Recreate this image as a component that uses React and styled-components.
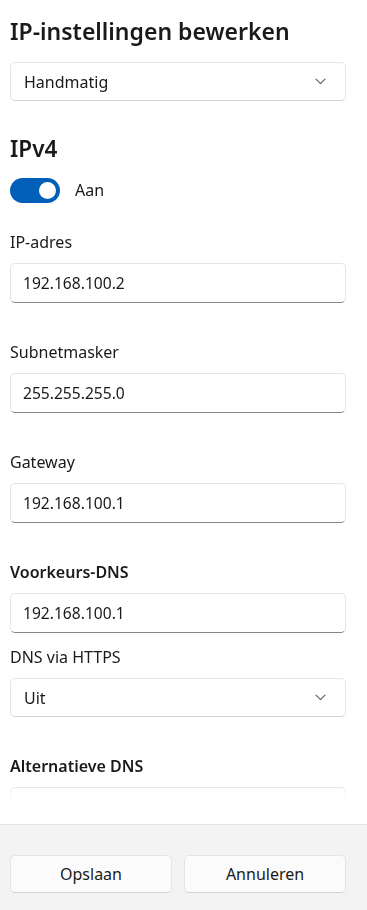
import React from 'react';
import styled, { createGlobalStyle } from 'styled-components';

const GlobalStyle = createGlobalStyle`
    html, body {
        margin: 0;
        padding: 0;
        background: #ffffff;
    }
    body {
        font-family: 'Noto Sans', 'Open Sans', sans-serif;
        color: #1a1a1a;
    }
`;

const Page = styled.div`
    width: 367px;
    height: 910px;
    display: flex;
    flex-direction: column;
    overflow: hidden;
`;

const Content = styled.div`
    flex: 1;
    min-height: 0;
    overflow: hidden;
    padding: 0 21px 0 10px;
    -webkit-mask-image: linear-gradient(to bottom, #000 calc(100% - 38px), transparent calc(100% - 24px));
    mask-image: linear-gradient(to bottom, #000 calc(100% - 38px), transparent calc(100% - 24px));
`;

const Title = styled.h1`
    margin: 14px 0 0;
    font-size: 23px;
    line-height: 34px;
    font-weight: 600;
    white-space: nowrap;
`;

const Section = styled.h2`
    margin: ${p => p.$top || 0}px 0 0;
    font-size: 22.5px;
    line-height: 34px;
    font-weight: 600;
`;

const Select = styled.div`
    margin-top: ${p => p.$top || 0}px;
    height: 39px;
    box-sizing: border-box;
    display: flex;
    align-items: center;
    justify-content: space-between;
    padding: 0 19px 0 13px;
    background: #ffffff;
    border: 1px solid #e5e5e5;
    border-bottom-color: #d2d2d2;
    border-radius: 5px;
    font-size: 16px;
`;

const Chevron = () => (
    <svg width="11" height="7" viewBox="0 0 11 7">
        <path d="M1 1.2 L5.5 5.7 L10 1.2" fill="none" stroke="#5d5d5d" strokeWidth="1.1" strokeLinecap="round" strokeLinejoin="round" />
    </svg>
);

const ToggleRow = styled.div`
    margin-top: 12px;
    display: flex;
    align-items: center;
    gap: 15px;
    font-size: 16px;
    line-height: 25px;
`;

const Switch = styled.div`
    width: 50px;
    height: 25px;
    border-radius: 13px;
    background: #005fb8;
    position: relative;
    flex-shrink: 0;

    &::after {
        content: '';
        position: absolute;
        top: 4px;
        right: 4px;
        width: 17px;
        height: 17px;
        border-radius: 50%;
        background: #ffffff;
    }
`;

const Field = styled.div`
    margin-top: ${p => p.$top}px;
`;

const Label = styled.div`
    font-size: 16px;
    line-height: 24px;
    font-weight: ${p => (p.$bold ? 600 : 400)};
    margin-bottom: 9px;
`;

const TextBox = styled.div`
    height: 40px;
    box-sizing: border-box;
    display: flex;
    align-items: center;
    padding: 0 12px;
    background: #ffffff;
    border: 1px solid #e5e5e5;
    border-bottom-color: #868686;
    border-radius: 5px;
    font-size: 15.6px;
`;

const Footer = styled.div`
    flex-shrink: 0;
    border-top: 1px solid #e5e5e5;
    background: #f3f3f3;
    padding: 30px 21px 17px 10px;
    display: grid;
    grid-template-columns: 1fr 1fr;
    gap: 12px;
`;

const Button = styled.button`
    height: 38px;
    background: #fbfbfb;
    border: 1px solid #e5e5e5;
    border-bottom-color: #d0d0d0;
    border-radius: 5px;
    font-family: inherit;
    font-size: 16px;
    color: #1a1a1a;
    padding: 0;
`;

export default function App() {
    return (
        <Page>
            <GlobalStyle />
            <Content>
                <Title>IP-instellingen bewerken</Title>
                <Select $top={14}>
                    <span>Handmatig</span>
                    <Chevron />
                </Select>
                <Section $top={31}>IPv4</Section>
                <ToggleRow>
                    <Switch />
                    <span>Aan</span>
                </ToggleRow>
                <Field $top={27}>
                    <Label>IP-adres</Label>
                    <TextBox>192.168.100.2</TextBox>
                </Field>
                <Field $top={37}>
                    <Label>Subnetmasker</Label>
                    <TextBox>255.255.255.0</TextBox>
                </Field>
                <Field $top={37}>
                    <Label>Gateway</Label>
                    <TextBox>192.168.100.1</TextBox>
                </Field>
                <Field $top={37}>
                    <Label $bold>Voorkeurs-DNS</Label>
                    <TextBox>192.168.100.1</TextBox>
                </Field>
                <Field $top={12}>
                    <Label>DNS via HTTPS</Label>
                    <Select>
                        <span>Uit</span>
                        <Chevron />
                    </Select>
                </Field>
                <Field $top={37}>
                    <Label $bold>Alternatieve DNS</Label>
                    <TextBox />
                </Field>
            </Content>
            <Footer>
                <Button>Opslaan</Button>
                <Button>Annuleren</Button>
            </Footer>
        </Page>
    );
}
